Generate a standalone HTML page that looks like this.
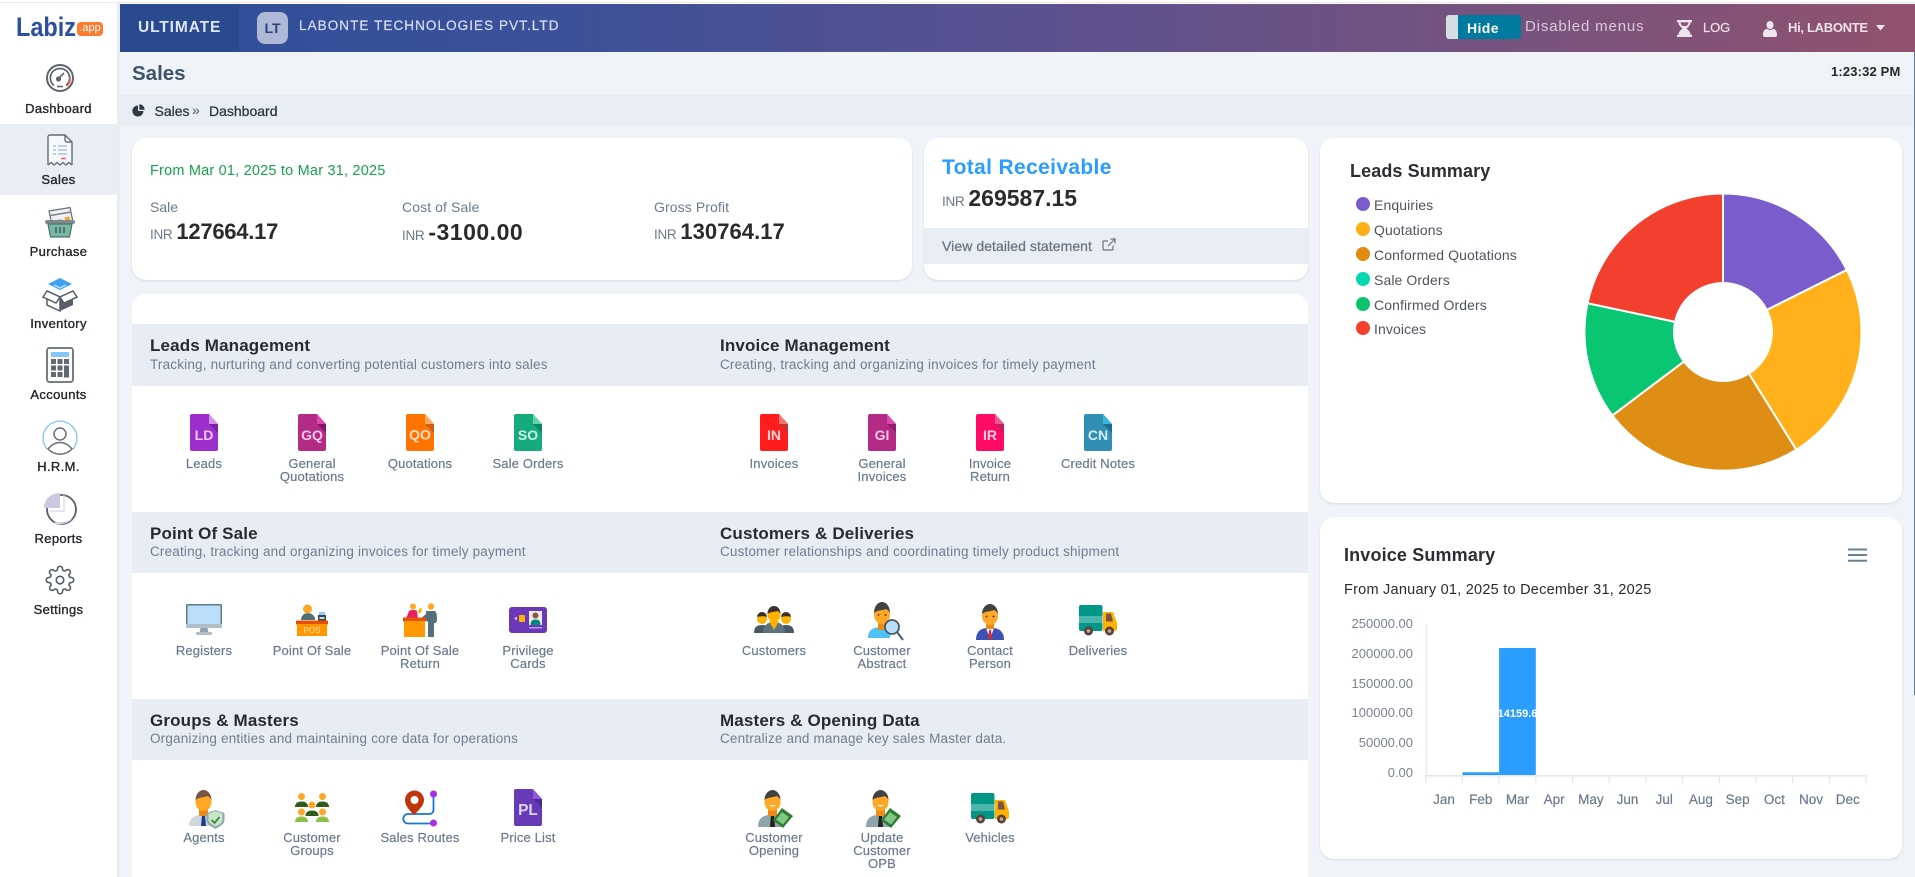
<!DOCTYPE html>
<html><head><meta charset="utf-8"><title>Sales</title>
<style>
html,body{margin:0;padding:0;width:1915px;height:877px;overflow:hidden;background:#f0f4f9;font-family:"Liberation Sans",sans-serif}
#p{position:relative;width:1915px;height:877px;overflow:hidden}
.b{position:absolute}
svg{position:absolute;overflow:visible}
.t{position:absolute;white-space:nowrap;line-height:20px;height:20px}
.m{-webkit-text-stroke:.25px currentColor}
.side{position:absolute;left:0;width:117px;text-align:center;font-size:13px;line-height:16px;color:#23272b;-webkit-text-stroke:.35px #23272b;letter-spacing:.35px}
.card{position:absolute;background:#fff;border-radius:14px;box-shadow:0 1px 2px rgba(90,110,140,.18)}
.band{position:absolute;left:132px;width:1176px;background:#e8edf4}
.h{position:absolute;white-space:nowrap;font-size:17px;font-weight:bold;line-height:20px;color:#2a2a2e;letter-spacing:.15px}
.s{position:absolute;white-space:nowrap;font-size:13.5px;line-height:16px;color:#6f7d8e;letter-spacing:.18px}
.l{position:absolute;width:108px;text-align:center;font-size:13px;line-height:13px;color:#6b7a8f;letter-spacing:.15px;-webkit-text-stroke:.2px #6b7a8f}
.inr{font-size:13.5px;color:#6b7a8f;margin-right:4px;letter-spacing:-.3px}
.v{font-size:22px;font-weight:bold;color:#2b2b2e;letter-spacing:-.25px}
.leg{position:absolute;left:1374px;font-size:14px;line-height:18px;color:#4f5560;white-space:nowrap;letter-spacing:.1px}
.dot{position:absolute;left:1355.5px;width:14px;height:14px;border-radius:50%}
.yl{position:absolute;width:80px;left:1333px;text-align:right;font-size:13px;line-height:14px;color:#7a8294}
.ml{position:absolute;width:36.7px;text-align:center;font-size:13.5px;line-height:14px;color:#6b7a8f;-webkit-text-stroke:.2px #6b7a8f}
</style></head><body><div id="p">

<!-- top edge -->
<div class="b" style="left:0;top:0;width:1915px;height:4px;background:#fff"></div>
<div class="b" style="left:0;top:2px;width:1915px;height:1px;background:#f6e3ef"></div>

<!-- sidebar -->
<div class="b" style="left:0;top:3px;width:117px;height:874px;background:#fff"></div>
<div class="b" style="left:117px;top:3px;width:3px;height:874px;background:#e8ecf3"></div>
<div class="b" style="left:0;top:124px;width:117px;height:71px;background:#e9edf4"></div>

<!-- logo -->
<div class="t" style="left:16px;top:16px;height:22px;line-height:22px;font-size:27px;font-weight:bold;color:#2b4fa3;transform:scaleX(.87);transform-origin:left center">Labiz</div>
<div class="b" style="left:77px;top:22px;width:26px;height:14px;background:#ff7a2f;border-radius:4px;color:#fff;font-size:11px;line-height:13px;text-align:center">.app</div>

<!-- Dashboard icon -->
<svg style="left:46px;top:64px" width="28" height="28" viewBox="0 0 28 28" fill="none">
<circle cx="14" cy="14" r="13" stroke="#5f6670" stroke-width="2"/>
<path d="M14 4.5A9.5 9.5 0 0 0 8 21.5M20 21.5A9.5 9.5 0 0 0 14 4.5" stroke="#5f6670" stroke-width="1.7"/>
<path d="M24 13A10 10 0 0 1 21 22" stroke="#e5655b" stroke-width="1.6"/>
<circle cx="12.5" cy="15" r="2.6" fill="#5f6670"/><path d="M13 14L18 9" stroke="#5f6670" stroke-width="1.6"/>
<path d="M11 22.5H17" stroke="#5f6670" stroke-width="1.6"/></svg>
<div class="side" style="top:100.500px">Dashboard</div>

<!-- Sales icon -->
<svg style="left:47px;top:134px" width="26" height="32" viewBox="0 0 26 32" fill="none">
<path d="M1 31V3a2 2 0 0 1 2-2h15l7 7v23l-3-2.5-3 2.5-3-2.5-3 2.5-3-2.5-3 2.5-3-2.5z" fill="#f7f8fb"/>
<path d="M1 31V3a2 2 0 0 1 2-2h15l7 7v23M18 1v5a2 2 0 0 0 2 2h5M1 31l3-2.5 3 2.5 3-2.5 3 2.5 3-2.5 3 2.5 3-2.5 3 2.5" stroke="#656c75" stroke-width="1.4"/>
<path d="M6 12h3M11 12h9M6 16h3M11 16h9M6 20h3M11 20h9" stroke="#a9c1de" stroke-width="1.5"/><path d="M14 24.5h5" stroke="#f0616d" stroke-width="1.6"/></svg>
<div class="side" style="top:171.500px">Sales</div>

<!-- Purchase icon -->
<svg style="left:44px;top:207px" width="32" height="31" viewBox="0 0 32 31" fill="none">
<path d="M5 4L26 0.5 29 15 8 18z" fill="#eef0f3" stroke="#666d76" stroke-width="1.2"/>
<path d="M6.5 8.5L27 5" stroke="#7a828c" stroke-width="1.4"/><rect x="21" y="10" width="5" height="3.5" fill="#f6a33a" transform="rotate(-10 23 12)"/><path d="M10 14l8-1.4" stroke="#777" stroke-width="1" stroke-dasharray="1.5 1"/>
<rect x="1" y="13" width="30" height="4" rx="2" fill="#7f8a90"/>
<path d="M4 17h24l-2.5 13H6.500z" fill="#78b9a5" stroke="#4f6f6a" stroke-width="1.2"/>
<path d="M12 20v6M16 20v6M20 20v6" stroke="#44605b" stroke-width="1.6"/></svg>
<div class="side" style="top:243.500px">Purchase</div>

<!-- Inventory icon -->
<svg style="left:42px;top:278px" width="36" height="33" viewBox="0 0 36 33" fill="none">
<path d="M18 0L30 6 18 12 6 6z" fill="#3ea2f5"/><path d="M12 7l6 3 6-3" stroke="#bfe2ff" stroke-width="1.3"/>
<path d="M5 13L18 19V33L5 27z" fill="#fff" stroke="#565e67" stroke-width="1.5"/><path d="M31 13L18 19V33L31 27z" fill="#565e67"/>
<path d="M5 13L1 19 14 25 18 19zM31 13l4 6-13 6-4-6z" fill="#fff" stroke="#565e67" stroke-width="1.5"/></svg>
<div class="side" style="top:315.500px">Inventory</div>

<!-- Accounts icon -->
<svg style="left:46px;top:347px" width="28" height="36" viewBox="0 0 28 36" fill="none">
<rect x="1" y="1" width="26" height="34" rx="2.500" fill="#fff" stroke="#666d76" stroke-width="1.8"/>
<rect x="5" y="5" width="18" height="5" fill="#84c8fb"/>
<g fill="#626973"><rect x="5" y="12" width="5" height="5"/><rect x="11.500" y="12" width="5" height="5"/><rect x="18" y="12" width="5" height="5"/><rect x="5" y="18.500" width="5" height="5"/><rect x="11.500" y="18.500" width="5" height="5"/><rect x="18" y="18.500" width="5" height="12"/><rect x="5" y="25" width="5" height="5"/><rect x="11.500" y="25" width="5" height="5"/></g></svg>
<div class="side" style="top:386.500px">Accounts</div>

<!-- HRM icon -->
<svg style="left:42px;top:419px" width="36" height="36" viewBox="0 0 36 36" fill="none">
<path d="M5 30A17 17 0 1 1 31 30" stroke="#8cc9fb" stroke-width="1.4"/>
<circle cx="18" cy="15" r="6" stroke="#6a7079" stroke-width="1.500"/>
<path d="M6 30C10 25 14 23.500 18 23.500S26 25 30 30C26 34 22 35.200 18 35.200S10 34 6 30z" stroke="#6a7079" stroke-width="1.500"/></svg>
<div class="side" style="top:458.500px">H.R.M.</div>

<!-- Reports icon -->
<svg style="left:43px;top:492px" width="34" height="33" viewBox="0 0 34 33" fill="none">
<circle cx="18.500" cy="17.500" r="14.500" fill="#fff" stroke="#565e67" stroke-width="1.8"/>
<path d="M7 30C12 33 24 34 30 26 26 30 14 31 7 30z" fill="#d5d0e6"/>
<path d="M17 1v15H1A15 15 0 0 1 17 1z" fill="#cdc8e2"/>
<path d="M21 3V19H6" stroke="#dcd8ec" stroke-width="1.200"/></svg>
<div class="side" style="top:530.500px">Reports</div>

<!-- Settings icon -->
<svg style="left:45px;top:565px" width="30" height="30" viewBox="0 0 24 24" fill="none" stroke="#55606b" stroke-width="1.300" stroke-linejoin="round">
<path d="M12 15a3 3 0 1 0 0-6 3 3 0 0 0 0 6z"/>
<path d="M19.400 15a1.650 1.650 0 0 0 .33 1.820l.06.06a2 2 0 0 1 0 2.830 2 2 0 0 1-2.830 0l-.06-.06a1.650 1.650 0 0 0-1.820-.33 1.650 1.650 0 0 0-1 1.510V21a2 2 0 0 1-2 2 2 2 0 0 1-2-2v-.09A1.650 1.650 0 0 0 9 19.400a1.650 1.650 0 0 0-1.820.33l-.06.06a2 2 0 0 1-2.830 0 2 2 0 0 1 0-2.830l.06-.06a1.650 1.650 0 0 0 .33-1.820 1.650 1.650 0 0 0-1.510-1H3a2 2 0 0 1-2-2 2 2 0 0 1 2-2h.09A1.650 1.650 0 0 0 4.600 9a1.650 1.650 0 0 0-.33-1.820l-.06-.06a2 2 0 0 1 0-2.830 2 2 0 0 1 2.830 0l.06.06a1.650 1.650 0 0 0 1.820.33H9a1.650 1.650 0 0 0 1-1.510V3a2 2 0 0 1 2-2 2 2 0 0 1 2 2v.09a1.650 1.650 0 0 0 1 1.510 1.650 1.650 0 0 0 1.820-.33l.06-.06a2 2 0 0 1 2.830 0 2 2 0 0 1 0 2.830l-.06.06a1.650 1.650 0 0 0-.33 1.820V9a1.650 1.650 0 0 0 1.510 1H21a2 2 0 0 1 2 2 2 2 0 0 1-2 2h-.09a1.650 1.650 0 0 0-1.510 1z"/></svg>
<div class="side" style="top:601.500px">Settings</div>

<!-- top bar -->
<div class="b" style="left:120px;top:4px;width:1795px;height:48px;background:linear-gradient(90deg,#2f4e9b 0%,#3c5199 25%,#5a5190 50%,#74537f 75%,#91526f 100%)"></div>
<div class="b" style="left:120px;top:4px;width:119px;height:48px;background:#2a4a90"></div>
<div class="t" style="left:138px;top:18px;font-size:15.500px;font-weight:bold;color:#dfe4f1;letter-spacing:.9px">ULTIMATE</div>
<div class="b" style="left:257px;top:12px;width:31px;height:32px;border-radius:8px;background:#aeb9d8;color:#2a4477;font-size:14px;font-weight:bold;line-height:32px;text-align:center">LT</div>
<div class="t m" style="left:299px;top:16px;font-size:13.500px;color:#d7dcee;letter-spacing:1.07px">LABONTE TECHNOLOGIES PVT.LTD</div>

<div class="b" style="left:1446px;top:15px;width:75px;height:24px;background:#007a9e;border-radius:3px"></div>
<div class="b" style="left:1446px;top:15px;width:12px;height:24px;background:#d6dde3;border-radius:3px 0 0 3px"></div>
<div class="t" style="left:1467px;top:18px;font-size:14px;font-weight:bold;color:#fff;letter-spacing:.4px">Hide</div>
<div class="t" style="left:1525px;top:17px;font-size:15px;color:#d9cbdb;letter-spacing:.85px">Disabled menus</div>
<svg style="left:1677px;top:20px" width="15" height="17" viewBox="0 0 15 17"><path d="M0 0h15v2.200h-1.500c0 3-2 4.500-4 6.300 2 1.800 4 3.300 4 6.300H15V17H0v-2.200h1.500c0-3 2-4.500 4-6.300-2-1.800-4-3.300-4-6.300H0z" fill="#f0e6ee"/><path d="M3.500 2.200h8c0 1.600-1 2.800-2 3.800h-4c-1-1-2-2.200-2-3.800z" fill="#8a5577"/></svg>
<div class="t m" style="left:1703px;top:18px;font-size:13px;color:#e9dfe8;letter-spacing:-.1px">LOG</div>
<svg style="left:1763px;top:21px" width="14" height="16" viewBox="0 0 14 16" fill="#f0e6ee"><ellipse cx="7" cy="4" rx="3.500" ry="4"/><path d="M0 14c0-4 2-6 4-6.200 1 .8 2 1.200 3 1.200s2-.4 3-1.200c2 .2 4 2.200 4 6.200 0 1.500-1 2-2 2H2c-1 0-2-.5-2-2z"/></svg>
<div class="t" style="left:1788px;top:18px;font-size:13px;font-weight:bold;color:#ede3ea;letter-spacing:-.3px">Hi, LABONTE</div>
<svg style="left:1876px;top:25px" width="9" height="6"><path d="M0 0h9L4.500 5.500z" fill="#f0e6ee"/></svg>

<!-- title + breadcrumb -->
<div class="t" style="left:132px;top:64px;font-size:20.500px;font-weight:bold;color:#3d5468">Sales</div>
<div class="t" style="left:1831px;top:62px;font-size:13px;font-weight:bold;color:#26282c;letter-spacing:.15px">1:23:32 PM</div>
<div class="b" style="left:120px;top:95px;width:1795px;height:31px;background:#e9edf4"></div>
<svg style="left:132px;top:104px" width="13" height="13" viewBox="0 0 13 13" fill="#2e3a45"><path d="M6 1.500V7h5.400A5.500 5.500 0 1 1 6 1.500z"/><path d="M7.300 0.300A5.500 5.500 0 0 1 12.700 5.700H7.300z"/></svg>
<div class="t m" style="left:154.5px;top:100.500px;font-size:14px;color:#2c3440">Sales</div>
<div class="t" style="left:192px;top:100px;font-size:14px;color:#4a5360">»</div>
<div class="t m" style="left:209px;top:100.500px;font-size:14px;color:#2c3440">Dashboard</div>

<!-- card 1 -->
<div class="card" style="left:132px;top:138px;width:780px;height:142px"></div>
<div class="t" style="left:150px;top:161px;font-size:14.5px;color:#17a24b;letter-spacing:.2px">From Mar 01, 2025 to Mar 31, 2025</div>
<div class="t" style="left:150px;top:197px;font-size:14px;color:#6b7a8f">Sale</div>
<div class="t" style="left:402px;top:197px;font-size:14px;color:#6b7a8f;letter-spacing:.1px">Cost of Sale</div>
<div class="t" style="left:654px;top:197px;font-size:14px;color:#6b7a8f;letter-spacing:.1px">Gross Profit</div>
<div class="t" style="left:150px;top:222px"><span class="inr">INR</span><span class="v">127664.17</span></div>
<div class="t" style="left:402px;top:222px"><span class="inr">INR</span><span class="v" style="font-size:23px;letter-spacing:.5px">-3100.00</span></div>
<div class="t" style="left:654px;top:222px"><span class="inr">INR</span><span class="v" style="letter-spacing:.05px">130764.17</span></div>

<!-- card 2 -->
<div class="card" style="left:924px;top:138px;width:384px;height:142px;overflow:hidden">
<div class="b" style="left:0;top:90px;width:384px;height:36px;background:#e9edf4"></div></div>
<div class="t" style="left:942px;top:158px;font-size:21px;font-weight:bold;color:#2a9dff;letter-spacing:.35px">Total Receivable</div>
<div class="t" style="left:942px;top:188px"><span class="inr">INR</span><span class="v" style="font-size:23px;letter-spacing:0">269587.15</span></div>
<div class="t m" style="left:942px;top:235.500px;font-size:14px;color:#6b7280;letter-spacing:.07px">View detailed statement</div>
<svg style="left:1102px;top:238px" width="14" height="13" viewBox="0 0 14 13" fill="none" stroke="#6b7280" stroke-width="1.200"><path d="M11 7.500V11a1 1 0 0 1-1 1H2a1 1 0 0 1-1-1V4a1 1 0 0 1 1-1h4M8.500 1H13v4.500M13 1L6 8"/></svg>

<!-- leads summary -->
<div class="card" style="left:1320px;top:138px;width:582px;height:365px"></div>
<div class="t" style="left:1350px;top:161px;font-size:18px;font-weight:bold;color:#2d2d32;letter-spacing:.1px">Leads Summary</div>
<div class="dot" style="top:197px;background:#7a5ccd"></div><div class="leg" style="top:196px">Enquiries</div>
<div class="dot" style="top:222px;background:#ffb01a"></div><div class="leg" style="top:221px">Quotations</div>
<div class="dot" style="top:247px;background:#e08c11"></div><div class="leg" style="top:246px">Conformed Quotations</div>
<div class="dot" style="top:271.500px;background:#06d6b0"></div><div class="leg" style="top:271px">Sale Orders</div>
<div class="dot" style="top:296.500px;background:#0ac26c"></div><div class="leg" style="top:296px">Confirmed Orders</div>
<div class="dot" style="top:321px;background:#f33f2b"></div><div class="leg" style="top:320px">Invoices</div>
<svg style="left:1722.500px;top:332px" width="1" height="1" viewBox="0 0 1 1" stroke="#fff" stroke-width="2">
<g transform="scale(1.0075)">
<path fill="#7a5ccd" d="M0 0V-137.500A137.500 137.500 0 0 1 122.900 -61.600Z"/>
<path fill="#ffb01a" d="M0 0L122.900 -61.600A137.500 137.500 0 0 1 72.700 116.800Z"/>
<path fill="#de8e15" d="M0 0L72.700 116.800A137.500 137.500 0 0 1 -109.800 82.800Z"/>
<path fill="#0ac673" d="M0 0L-109.800 82.800A137.500 137.500 0 0 1 -134.500 -28.600Z"/>
<path fill="#f33f2d" d="M0 0L-134.500 -28.600A137.500 137.500 0 0 1 0 -137.500Z"/>
<circle r="49.600" fill="#fff" stroke="none"/></g></svg>

<!-- invoice summary -->
<div class="card" style="left:1320px;top:517px;width:582px;height:342px"></div>
<div class="t" style="left:1344px;top:545px;font-size:18px;font-weight:bold;color:#2d2d32;letter-spacing:.15px">Invoice Summary</div>
<svg style="left:1848px;top:548px" width="19" height="14"><path d="M0 1.500h19M0 7h19M0 12.700h19" stroke="#6e8192" stroke-width="2"/></svg>
<div class="t" style="left:1344px;top:579.500px;font-size:14.5px;color:#2b2b2e;letter-spacing:.24px">From January 01, 2025 to December 31, 2025</div>
<div class="yl" style="top:617px">250000.00</div>
<div class="yl" style="top:646.500px">200000.00</div>
<div class="yl" style="top:677px">150000.00</div>
<div class="yl" style="top:706px">100000.00</div>
<div class="yl" style="top:736px">50000.00</div>
<div class="yl" style="top:766px">0.00</div>
<svg style="left:1420px;top:620px" width="450" height="170" fill="none">
<path d="M6.500 4V156" stroke="#e9e9ea" stroke-width="1.500"/>
<path d="M5.700 155.700H446" stroke="#e6e6e8" stroke-width="1.500"/>
<path d="M5.700 155V163M42.400 155V163M79.100 155V163M115.800 155V163M152.500 155V163M189.200 155V163M225.900 155V163M262.600 155V163M299.300 155V163M336 155V163M372.700 155V163M409.400 155V163M446 155V163" stroke="#e6e6e8" stroke-width="1.200"/>
<rect x="42.400" y="152.300" width="36.700" height="2.700" fill="#2a9dff"/>
<rect x="79.100" y="28" width="36.700" height="127" fill="#2a9dff"/></svg>
<div class="b" style="left:1499px;top:707px;width:37px;height:14px;overflow:hidden;color:#fff;font-size:11px;font-weight:bold;line-height:14px;text-align:center"><div style="margin-left:-10px;width:57px">214159.66</div></div>
<div class="ml" style="left:1425.700px;top:793px">Jan</div><div class="ml" style="left:1462.400px;top:793px">Feb</div><div class="ml" style="left:1499.100px;top:793px">Mar</div><div class="ml" style="left:1535.800px;top:793px">Apr</div><div class="ml" style="left:1572.500px;top:793px">May</div><div class="ml" style="left:1609.200px;top:793px">Jun</div><div class="ml" style="left:1645.900px;top:793px">Jul</div><div class="ml" style="left:1682.600px;top:793px">Aug</div><div class="ml" style="left:1719.300px;top:793px">Sep</div><div class="ml" style="left:1756px;top:793px">Oct</div><div class="ml" style="left:1792.700px;top:793px">Nov</div><div class="ml" style="left:1829.400px;top:793px">Dec</div>

<!-- scrollbar hint -->
<div class="b" style="left:1914px;top:52px;width:1px;height:643px;background:#6b7a8c"></div>

<!-- main card -->
<div class="b" style="left:132px;top:294px;width:1176px;height:600px;background:#fff;border-radius:14px 14px 0 0"></div>
<div class="band" style="top:324px;height:62px"></div>
<div class="band" style="top:512px;height:61px"></div>
<div class="band" style="top:699px;height:61px"></div>

<div class="h" style="left:150px;top:336px">Leads Management</div>
<div class="s" style="left:150px;top:357px">Tracking, nurturing and converting potential customers into sales</div>
<div class="h" style="left:720px;top:336px">Invoice Management</div>
<div class="s" style="left:720px;top:357px">Creating, tracking and organizing invoices for timely payment</div>
<div class="h" style="left:150px;top:524px">Point Of Sale</div>
<div class="s" style="left:150px;top:544px">Creating, tracking and organizing invoices for timely payment</div>
<div class="h" style="left:720px;top:524px">Customers &amp; Deliveries</div>
<div class="s" style="left:720px;top:544px">Customer relationships and coordinating timely product shipment</div>
<div class="h" style="left:150px;top:711px">Groups &amp; Masters</div>
<div class="s" style="left:150px;top:731px">Organizing entities and maintaining core data for operations</div>
<div class="h" style="left:720px;top:711px">Masters &amp; Opening Data</div>
<div class="s" style="left:720px;top:731px">Centralize and manage key sales Master data.</div>

<!-- row 1 file icons -->
<svg style="left:190px;top:414px" width="28" height="38" viewBox="0 0 28 38"><path d="M2 0H19L28 10V35a2 2 0 0 1-2 2H2a2 2 0 0 1-2-2V2a2 2 0 0 1 2-2z" fill="#9c2fcb"/><path d="M19 0l9 10h-9z" fill="#d58eea"/><path d="M19 10h9v9z" fill="#7a1fa6"/><text x="14" y="26" text-anchor="middle" font-family="Liberation Sans" font-weight="bold" font-size="14" fill="#ecc9f6">LD</text></svg>
<svg style="left:298px;top:414px" width="28" height="38" viewBox="0 0 28 38"><path d="M2 0H19L28 10V35a2 2 0 0 1-2 2H2a2 2 0 0 1-2-2V2a2 2 0 0 1 2-2z" fill="#b32b85"/><path d="M19 0l9 10h-9z" fill="#e045b0"/><path d="M19 10h9v9z" fill="#8a1372"/><text x="14" y="26" text-anchor="middle" font-family="Liberation Sans" font-weight="bold" font-size="14" fill="#f0c8e2">GQ</text></svg>
<svg style="left:406px;top:414px" width="28" height="38" viewBox="0 0 28 38"><path d="M2 0H19L28 10V35a2 2 0 0 1-2 2H2a2 2 0 0 1-2-2V2a2 2 0 0 1 2-2z" fill="#ff7300"/><path d="M19 0l9 10h-9z" fill="#ffa860"/><path d="M19 10h9v9z" fill="#c85f12"/><text x="14" y="25.500" text-anchor="middle" font-family="Liberation Sans" font-weight="bold" font-size="14" fill="#ffe1c4">QO</text></svg>
<svg style="left:514px;top:414px" width="28" height="38" viewBox="0 0 28 38"><path d="M2 0H19L28 10V35a2 2 0 0 1-2 2H2a2 2 0 0 1-2-2V2a2 2 0 0 1 2-2z" fill="#15ab7c"/><path d="M19 0l9 10h-9z" fill="#5fd4ad"/><path d="M19 10h9v9z" fill="#0c8660"/><text x="14" y="26" text-anchor="middle" font-family="Liberation Sans" font-weight="bold" font-size="14" fill="#cdf1e4">SO</text></svg>
<svg style="left:760px;top:414px" width="28" height="38" viewBox="0 0 28 38"><path d="M2 0H19L28 10V35a2 2 0 0 1-2 2H2a2 2 0 0 1-2-2V2a2 2 0 0 1 2-2z" fill="#ff1d1d"/><path d="M19 0l9 10h-9z" fill="#f4736f"/><path d="M19 10h9v9z" fill="#c93030"/><text x="14" y="26" text-anchor="middle" font-family="Liberation Sans" font-weight="bold" font-size="14" fill="#ffd4d4">IN</text></svg>
<svg style="left:868px;top:414px" width="28" height="38" viewBox="0 0 28 38"><path d="M2 0H19L28 10V35a2 2 0 0 1-2 2H2a2 2 0 0 1-2-2V2a2 2 0 0 1 2-2z" fill="#b32b85"/><path d="M19 0l9 10h-9z" fill="#e045b0"/><path d="M19 10h9v9z" fill="#8e1f70"/><text x="14" y="26" text-anchor="middle" font-family="Liberation Sans" font-weight="bold" font-size="14" fill="#f0c8e2">GI</text></svg>
<svg style="left:976px;top:414px" width="28" height="38" viewBox="0 0 28 38"><path d="M2 0H19L28 10V35a2 2 0 0 1-2 2H2a2 2 0 0 1-2-2V2a2 2 0 0 1 2-2z" fill="#ff0a64"/><path d="M19 0l9 10h-9z" fill="#ed5a91"/><path d="M19 10h9v9z" fill="#c41e60"/><text x="14" y="26" text-anchor="middle" font-family="Liberation Sans" font-weight="bold" font-size="14" fill="#ffd0e0">IR</text></svg>
<svg style="left:1084px;top:414px" width="28" height="38" viewBox="0 0 28 38"><path d="M2 0H19L28 10V35a2 2 0 0 1-2 2H2a2 2 0 0 1-2-2V2a2 2 0 0 1 2-2z" fill="#328fb3"/><path d="M19 0l9 10h-9z" fill="#35b4e0"/><path d="M19 10h9v9z" fill="#1d6f8f"/><text x="14" y="26" text-anchor="middle" font-family="Liberation Sans" font-weight="bold" font-size="14" fill="#d2edf6">CN</text></svg>

<!-- row 2 icons -->
<svg style="left:186px;top:604px" width="36" height="31" viewBox="0 0 36 31"><rect width="36" height="24" rx="1.500" fill="#5f7a88"/><rect x="1.500" y="1.500" width="33" height="18.500" fill="#bbdefb"/><path d="M0 20h36v2.500a1.500 1.500 0 0 1-1.500 1.500h-33A1.500 1.500 0 0 1 0 22.500z" fill="#b0bec5"/><path d="M14.500 24h7l1 4h-9z" fill="#90a4ae"/><rect x="10" y="28" width="16" height="3" rx="1" fill="#b0bec5"/></svg>
<svg style="left:296px;top:604px" width="32" height="32" viewBox="0 0 32 32"><path d="M5 16c0-5 4-7 7-7s6 2 7 5v2z" fill="#546e7a"/><circle cx="11.500" cy="5" r="4.500" fill="#ffa726"/><rect x="22" y="11" width="8" height="6" fill="#37474f"/><rect x="23.500" y="13" width="5" height="2" fill="#cfd8dc"/><rect x="23" y="8" width="6" height="3" fill="#90caf9"/><rect y="16.500" width="32" height="4" fill="#e65100"/><rect x="1" y="20" width="30" height="12" fill="#ff9800"/><text x="16" y="29" text-anchor="middle" font-family="Liberation Sans" font-size="8" fill="#ffe0b2">POS</text></svg>
<svg style="left:403px;top:603px" width="34" height="34" viewBox="0 0 34 34"><circle cx="10" cy="3.500" r="3" fill="#ffa726"/><path d="M3 16L6 8c2-1.500 6-1.500 8 0l1 8z" fill="#e91e63"/><path d="M15 8l3-4 1 4-3 3z" fill="#ffb300"/><circle cx="28" cy="3.500" r="3.200" fill="#ffa726"/><path d="M23 8h9c2 2 2 5 2 9l-1 3h-2v14h-6V19l-3-2-6 0 7-6z" fill="#546e7a"/><rect y="14.500" width="23" height="4" fill="#e65100"/><rect x="1" y="18" width="21" height="16" fill="#ff9800"/></svg>
<svg style="left:509px;top:607px" width="38" height="26" viewBox="0 0 38 26"><rect width="38" height="26" rx="3" fill="#6a38b8"/><rect x="20" y="4" width="13" height="14" fill="#e8eef2"/><circle cx="26.500" cy="8.500" r="3" fill="#8d5a3a"/><path d="M21.500 18c0-4 2-5.500 5-5.500s5 1.500 5 5.500z" fill="#00897b"/><rect x="20" y="20" width="13" height="1.500" fill="#b39ddb"/><rect x="10" y="8" width="6" height="7" rx="1" fill="#ffb300"/><path d="M5 11.500l3-2v4z" fill="#d1c4e9"/></svg>

<svg style="left:754px;top:606px" width="40" height="27" viewBox="0 0 40 27"><circle cx="8" cy="13" r="5" fill="#ffb300"/><path d="M3 11a5 5 0 0 1 10 0c-2-1-6-1-10 0z" fill="#3e2f28"/><path d="M0 27c0-6 3-8 8-8s8 2 8 8z" fill="#455a64"/><circle cx="32" cy="13" r="5" fill="#ffb300"/><path d="M27 11a5 5 0 0 1 10 0c-2-1-6-1-10 0z" fill="#3e2f28"/><path d="M24 27c0-6 3-8 8-8s8 2 8 8z" fill="#455a64"/><path d="M9 27c0-8 5-11 11-11s11 3 11 11z" fill="#5f7280"/><path d="M15 15l5 9 5-9z" fill="#ffb300"/><ellipse cx="20" cy="8.500" rx="6.500" ry="7.500" fill="#ffb300"/><path d="M13.500 8c0-5 3-8 6.500-8s6.500 3 6.500 8c-1-2-2-2.500-3-3-2 1-7 .5-10 3z" fill="#3e2f28"/></svg>
<svg style="left:868px;top:602px" width="35" height="40" viewBox="0 0 35 40"><path d="M0 36c0-8 5-11 14-11 6 0 8 3 8 11z" fill="#4fc3f7"/><rect x="10" y="20" width="8" height="8" fill="#ef8a17"/><ellipse cx="14" cy="13" rx="8" ry="9" fill="#ffa726"/><path d="M6 11C6 4 10 0 14 0s8 4 8 11c-1-2-2-3-4-4C15 8.500 9 8 6 11z" fill="#424242"/><circle cx="10.500" cy="13" r=".9" fill="#3e2723"/><circle cx="17.500" cy="13" r=".9" fill="#3e2723"/><circle cx="24" cy="25" r="7" fill="#bbdefb" stroke="#455a64" stroke-width="1.800"/><path d="M29 30l6 8" stroke="#455a64" stroke-width="2"/></svg>
<svg style="left:976px;top:604px" width="28" height="36" viewBox="0 0 28 36"><path d="M0 36c0-8 4-11 10-12h8c6 1 10 4 10 12z" fill="#3f51b5"/><path d="M10 24h8l-4 11z" fill="#fff"/><path d="M13 26h2l1 9h-4z" fill="#d32f2f"/><rect x="10" y="18" width="8" height="7" fill="#ef8a17"/><ellipse cx="14" cy="12" rx="8" ry="9" fill="#ffa726"/><path d="M6 10C6 4 10 0 14 0s8 4 8 10c-1-2-2-3-4-4C15 7.500 9 7 6 10z" fill="#424242"/><circle cx="10.500" cy="12.500" r=".9" fill="#3e2723"/><circle cx="17.500" cy="12.500" r=".9" fill="#3e2723"/></svg>
<svg style="left:1079px;top:605px" width="38" height="31" viewBox="0 0 38 31"><rect x="0" y="0" width="23.500" height="26" rx="2" fill="#009688"/><rect x="0" y="11" width="23.500" height="7" fill="#4db6ac"/><path d="M24 7h8c2 0 3 1 3 3l3 8v6a2 2 0 0 1-2 2H24z" fill="#ffb300"/><path d="M27 8.500h5l2 8h-7z" fill="#795548"/><circle cx="9.500" cy="26" r="4.500" fill="#5d4037"/><circle cx="9.500" cy="26" r="1.800" fill="#bcaaa4"/><circle cx="30.500" cy="26" r="4.500" fill="#5d4037"/><circle cx="30.500" cy="26" r="1.800" fill="#bcaaa4"/></svg>

<!-- row 3 icons -->
<svg style="left:189px;top:790px" width="36" height="39" viewBox="0 0 36 39"><path d="M0 36c0-7 4-10 10-11h9c4 1 6 4 7 11z" fill="#cfd8dc"/><path d="M13 25h3l1 11h-5z" fill="#1a3a8f"/><rect x="10" y="18" width="9" height="8" fill="#ef8a17"/><ellipse cx="14.500" cy="12" rx="8" ry="9" fill="#ffa726"/><path d="M6.500 10C6.500 4 10.500 0 14.500 0s8 4 8 10c-1-2-2-3-4-4-3 1.500-9 1-12 4z" fill="#795548"/><path d="M26.500 22l9 3v7c0 4-4 6-9 9-5-3-9-5-9-9v-7z" transform="translate(0,-2)" fill="#90a4ae"/><path d="M26.500 23l7 2.500v6c0 3-3 5-7 7-4-2-7-4-7-7v-6z" transform="translate(0,-2)" fill="#c8e6c9"/><path d="M22.500 30l3 3 5-6" fill="none" stroke="#388e3c" stroke-width="1.800"/></svg>
<svg style="left:295px;top:793px" width="34" height="29" viewBox="0 0 34 29"><circle cx="6.500" cy="3.500" r="3.500" fill="#ffa726"/><path d="M0 14c0-4 3-5.500 6.500-5.500S13 10 13 14z" fill="#2e5a1e"/><circle cx="27.500" cy="3.500" r="3.500" fill="#ffa726"/><path d="M21 14c0-4 3-5.500 6.500-5.500S34 10 34 14z" fill="#2e5a1e"/><circle cx="17" cy="12" r="3.500" fill="#ffa726"/><path d="M10.500 23c0-4 3-5.500 6.500-5.500s6.500 1.500 6.500 5.500z" fill="#2e5a1e"/><circle cx="6.500" cy="19" r="3.500" fill="#ffa726"/><path d="M0 29c0-4 3-5.500 6.500-5.500S13 25 13 29z" fill="#8bc34a"/><circle cx="27.500" cy="19" r="3.500" fill="#ffa726"/><path d="M21 29c0-4 3-5.500 6.500-5.500S34 25 34 29z" fill="#8bc34a"/></svg>
<svg style="left:402px;top:790px" width="36" height="37" viewBox="0 0 36 37" fill="none"><path d="M31.500 4V20a4 4 0 0 1-4 4H6a4.500 4.500 0 0 0 0 9.500h26" stroke="#1976d2" stroke-width="1.800"/><path d="M12 25C6 19 3 15 3 10a9.500 9.500 0 0 1 19 0c0 5-4 9-10 15z" fill="#bf360c"/><circle cx="12.500" cy="10" r="4" fill="#fff"/><circle cx="31.500" cy="4" r="3.500" fill="#a92fe6"/><circle cx="31.500" cy="33" r="3.500" fill="#a92fe6"/></svg>
<svg style="left:514px;top:789px" width="28" height="38" viewBox="0 0 28 38"><path d="M2 0H19L28 10V35a2 2 0 0 1-2 2H2a2 2 0 0 1-2-2V2a2 2 0 0 1 2-2z" fill="#673ab7"/><path d="M19 0l9 10h-9z" fill="#8e5ad8"/><path d="M19 10h9v9z" fill="#4e2a96"/><text x="14" y="26" text-anchor="middle" font-family="Liberation Sans" font-weight="bold" font-size="15.500" fill="#e0d4f5">PL</text></svg>

<svg style="left:758px;top:790px" width="36" height="38" viewBox="0 0 36 38"><path d="M0 37c0-8 4-11 10-12h9c4 1 6 4 7 12z" fill="#90a4ae"/><path d="M13 25h3l1 12h-5z" fill="#212121"/><rect x="10" y="18" width="9" height="8" fill="#ef8a17"/><ellipse cx="14.500" cy="12" rx="8" ry="9" fill="#ffa726"/><path d="M6.500 10C6.500 4 10.500 0 14.500 0s8 4 8 10c-1-2-2-3-4-4-3 1.500-9 1-12 4z" fill="#424242"/><path d="M11 15q3.500 3 7 0z" fill="#fff"/><path d="M24 18l11 8-10 12-10-8z" fill="#2e7d32"/><path d="M24 22l7 5-6 7.500-7-5z" fill="#81c784"/></svg>
<svg style="left:866px;top:790px" width="36" height="38" viewBox="0 0 36 38"><path d="M0 37c0-8 4-11 10-12h9c4 1 6 4 7 12z" fill="#90a4ae"/><path d="M13 25h3l1 12h-5z" fill="#212121"/><rect x="10" y="18" width="9" height="8" fill="#ef8a17"/><ellipse cx="14.500" cy="12" rx="8" ry="9" fill="#ffa726"/><path d="M6.500 10C6.500 4 10.500 0 14.500 0s8 4 8 10c-1-2-2-3-4-4-3 1.500-9 1-12 4z" fill="#424242"/><path d="M11 15q3.500 3 7 0z" fill="#fff"/><path d="M24 18l11 8-10 12-10-8z" fill="#2e7d32"/><path d="M24 22l7 5-6 7.500-7-5z" fill="#81c784"/></svg>
<svg style="left:971px;top:793px" width="38" height="31" viewBox="0 0 38 31"><rect x="0" y="0" width="23.500" height="26" rx="2" fill="#009688"/><rect x="0" y="11" width="23.500" height="7" fill="#4db6ac"/><path d="M24 7h8c2 0 3 1 3 3l3 8v6a2 2 0 0 1-2 2H24z" fill="#ffb300"/><path d="M27 8.500h5l2 8h-7z" fill="#795548"/><circle cx="9.500" cy="26" r="4.500" fill="#5d4037"/><circle cx="9.500" cy="26" r="1.800" fill="#bcaaa4"/><circle cx="30.500" cy="26" r="4.500" fill="#5d4037"/><circle cx="30.500" cy="26" r="1.800" fill="#bcaaa4"/></svg>

<!-- labels -->
<div class="l" style="left:150px;top:457px">Leads</div>
<div class="l" style="left:258px;top:457px">General<br>Quotations</div>
<div class="l" style="left:366px;top:457px">Quotations</div>
<div class="l" style="left:474px;top:457px">Sale Orders</div>
<div class="l" style="left:720px;top:457px">Invoices</div>
<div class="l" style="left:828px;top:457px">General<br>Invoices</div>
<div class="l" style="left:936px;top:457px">Invoice<br>Return</div>
<div class="l" style="left:1044px;top:457px">Credit Notes</div>

<div class="l" style="left:150px;top:644px">Registers</div>
<div class="l" style="left:258px;top:644px">Point Of Sale</div>
<div class="l" style="left:366px;top:644px">Point Of Sale<br>Return</div>
<div class="l" style="left:474px;top:644px">Privilege<br>Cards</div>
<div class="l" style="left:720px;top:644px">Customers</div>
<div class="l" style="left:828px;top:644px">Customer<br>Abstract</div>
<div class="l" style="left:936px;top:644px">Contact<br>Person</div>
<div class="l" style="left:1044px;top:644px">Deliveries</div>

<div class="l" style="left:150px;top:831px">Agents</div>
<div class="l" style="left:258px;top:831px">Customer<br>Groups</div>
<div class="l" style="left:366px;top:831px">Sales Routes</div>
<div class="l" style="left:474px;top:831px">Price List</div>
<div class="l" style="left:720px;top:831px">Customer<br>Opening</div>
<div class="l" style="left:828px;top:831px">Update<br>Customer<br>OPB</div>
<div class="l" style="left:936px;top:831px">Vehicles</div>

</div></body></html>
